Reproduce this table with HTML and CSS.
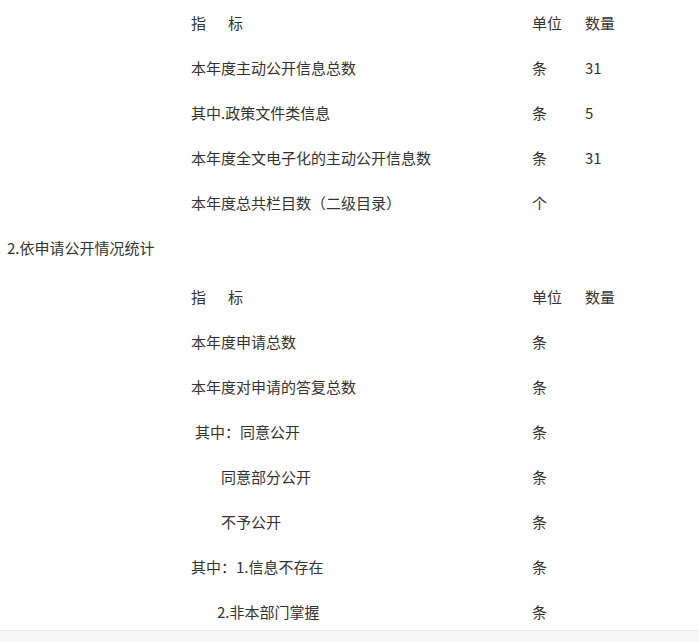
FILE: index.html
```html
<!DOCTYPE html>
<html lang="zh-CN">
<head>
<meta charset="utf-8">
<title>政府信息公开统计</title>
<link rel="stylesheet" href="styles.css">
</head>
<body>
<div class="page">
  <table class="stat">
    <tr><td class="name"><span class="sp">指</span>标</td><td class="unit">单位</td><td class="num">数量</td></tr>
    <tr><td class="name">本年度主动公开信息总数</td><td class="unit">条</td><td class="num">31</td></tr>
    <tr><td class="name">其中.政策文件类信息</td><td class="unit">条</td><td class="num">5</td></tr>
    <tr><td class="name">本年度全文电子化的主动公开信息数</td><td class="unit">条</td><td class="num">31</td></tr>
    <tr><td class="name">本年度总共栏目数（二级目录）</td><td class="unit">个</td><td class="num"></td></tr>
  </table>
  <p class="heading">2.依申请公开情况统计</p>
  <table class="stat">
    <tr><td class="name"><span class="sp">指</span>标</td><td class="unit">单位</td><td class="num">数量</td></tr>
    <tr><td class="name">本年度申请总数</td><td class="unit">条</td><td class="num"></td></tr>
    <tr><td class="name">本年度对申请的答复总数</td><td class="unit">条</td><td class="num"></td></tr>
    <tr><td class="name ind1">其中：同意公开</td><td class="unit">条</td><td class="num"></td></tr>
    <tr><td class="name ind2">同意部分公开</td><td class="unit">条</td><td class="num"></td></tr>
    <tr><td class="name ind2">不予公开</td><td class="unit">条</td><td class="num"></td></tr>
    <tr><td class="name">其中：1.信息不存在</td><td class="unit">条</td><td class="num"></td></tr>
    <tr><td class="name ind3">2.非本部门掌握</td><td class="unit">条</td><td class="num"></td></tr>
  </table>
</div>
<div class="bottom-bar"></div>
</body>
</html>
```
FILE: styles.css
```css
html, body {
  margin: 0;
  padding: 0;
  background: #fff;
}
body {
  font-family: "Noto Sans CJK SC", "Microsoft YaHei", "Noto Sans", sans-serif;
  font-size: 15px;
  color: #333;
}
.page {
  padding: 0 0 40px 0;
}
.stat {
  border-collapse: collapse;
  table-layout: fixed;
  width: 453px;
  margin-left: 191px;
}
.stat td {
  height: 45px;
  padding: 0;
  line-height: 20px;
  vertical-align: middle;
  white-space: nowrap;
}
.stat .name {
  width: 341px;
}
.stat .unit {
  width: 52px;
}
.stat .num {
  width: 60px;
  padding-left: 1px;
}
.sp {
  margin-right: 22px;
}
.stat .ind1 {
  padding-left: 4px;
}
.stat .ind2 {
  padding-left: 30px;
}
.stat .ind3 {
  padding-left: 26px;
}
.heading {
  margin: 0;
  padding-left: 7px;
  height: 49px;
  line-height: 46px;
  font-size: 15px;
}
.bottom-bar {
  position: fixed;
  left: 0;
  right: 0;
  bottom: 0;
  height: 11px;
  background: #f6f6f6;
  border-top: 1px solid #ebebeb;
}
```
